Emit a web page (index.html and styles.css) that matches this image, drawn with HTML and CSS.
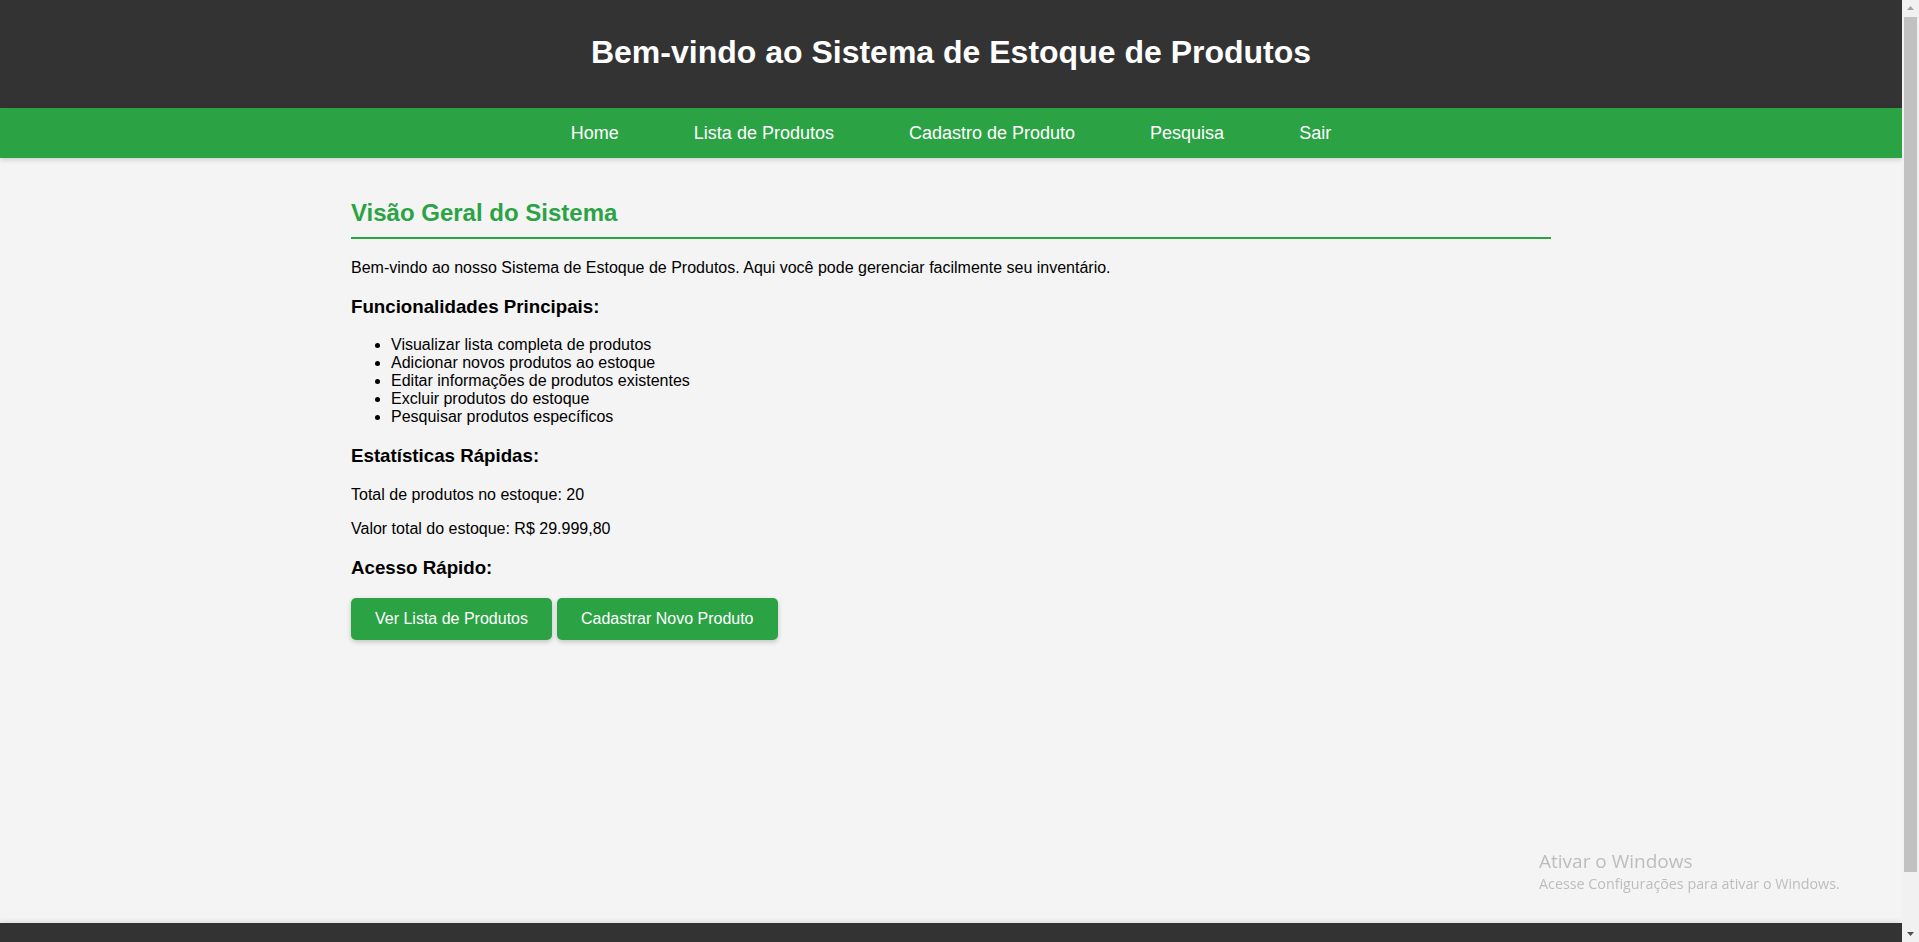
FILE: index.html
```html
<!DOCTYPE html>
<html lang="pt-BR">
<head>
<meta charset="UTF-8">
<title>Sistema de Estoque de Produtos</title>
<link rel="stylesheet" href="styles.css">
</head>
<body>
<header class="site-header">
  <h1 class="site-title">Bem-vindo ao Sistema de Estoque de Produtos</h1>
</header>
<nav class="main-nav">
  <a class="nav-link" href="#">Home</a>
  <a class="nav-link" href="#">Lista de Produtos</a>
  <a class="nav-link" href="#">Cadastro de Produto</a>
  <a class="nav-link" href="#">Pesquisa</a>
  <a class="nav-link" href="#">Sair</a>
</nav>
<main class="container">
  <h2 class="section-title">Visão Geral do Sistema</h2>
  <p>Bem-vindo ao nosso Sistema de Estoque de Produtos. Aqui você pode gerenciar facilmente seu inventário.</p>
  <h3>Funcionalidades Principais:</h3>
  <ul class="features">
    <li>Visualizar lista completa de produtos</li>
    <li>Adicionar novos produtos ao estoque</li>
    <li>Editar informações de produtos existentes</li>
    <li>Excluir produtos do estoque</li>
    <li>Pesquisar produtos específicos</li>
  </ul>
  <h3>Estatísticas Rápidas:</h3>
  <p>Total de produtos no estoque: 20</p>
  <p>Valor total do estoque: R$ 29.999,80</p>
  <h3>Acesso Rápido:</h3>
  <div class="quick-actions">
    <a class="btn" href="#">Ver Lista de Produtos</a>
    <a class="btn" href="#">Cadastrar Novo Produto</a>
  </div>
</main>
<footer class="site-footer"></footer>
<div class="win-watermark">
  <div class="win-title">Ativar o Windows</div>
  <div class="win-sub">Acesse Configurações para ativar o Windows.</div>
</div>
<div class="fake-scrollbar">
  <svg class="sb-arrow sb-up" width="17" height="17" viewBox="0 0 17 17"><path d="M5 10 L8.5 6 L12 10 Z" fill="#a3a3a3"/></svg>
  <div class="sb-thumb"></div>
  <svg class="sb-arrow sb-down" width="17" height="17" viewBox="0 0 17 17"><path d="M5 7 L8.5 11 L12 7 Z" fill="#505050"/></svg>
</div>
</body>
</html>
```
FILE: styles.css
```css
html {
  overflow: hidden;
}

body {
  margin: 0 17px 0 0;
  font-family: "Liberation Sans", Arial, sans-serif;
  font-size: 16px;
  background: #f4f4f4;
  color: #000;
}

.site-header {
  background: #333;
  color: #fff;
  text-align: center;
  padding: 34px 0 37px;
}

.site-title {
  margin: 0;
  font-size: 32px;
  line-height: 37px;
  font-weight: bold;
}

.main-nav {
  background: #2ba345;
  display: flex;
  justify-content: center;
  gap: 35px;
  box-shadow: 0 2px 5px rgba(0, 0, 0, 0.15);
  position: relative;
}

.nav-link {
  display: block;
  color: #fff;
  text-decoration: none;
  font-size: 18px;
  padding: 14px 20px;
  line-height: 22px;
}

.container {
  max-width: 1200px;
  margin: 0 auto;
  padding: 21px 20px 20px;
  min-height: 724px;
}

.section-title {
  color: #2ba345;
  font-size: 24px;
  margin: 20px 0 20px;
  padding-bottom: 10px;
  border-bottom: 2px solid #2ba345;
}

.features {
  padding-left: 40px;
}

.quick-actions {
  display: flex;
  gap: 5px;
  margin-top: 19px;
}

.btn {
  display: inline-block;
  background: #2ba345;
  color: #fff;
  text-decoration: none;
  padding: 12px 24px;
  border-radius: 5px;
  box-shadow: 0 2px 5px rgba(0, 0, 0, 0.2);
}

.site-footer {
  background: #333;
  height: 60px;
  box-shadow: 0 -2px 5px rgba(0, 0, 0, 0.08);
}

.win-watermark {
  position: fixed;
  left: 1539px;
  top: 849px;
  color: #bdbdbd;
  font-family: "Open Sans", "Noto Sans", sans-serif;
  pointer-events: none;
}

.win-title {
  font-size: 19px;
  line-height: 24px;
}

.win-sub {
  font-size: 14.3px;
  line-height: 22px;
}

.fake-scrollbar {
  position: fixed;
  top: 0;
  right: 0;
  width: 17px;
  height: 100vh;
  background: #f1f1f1;
  display: flex;
  flex-direction: column;
}

.sb-arrow {
  display: block;
  flex: none;
}

.sb-thumb {
  flex: 1;
  margin: 0 2px 53px 2px;
  background: #c1c1c1;
}
```
